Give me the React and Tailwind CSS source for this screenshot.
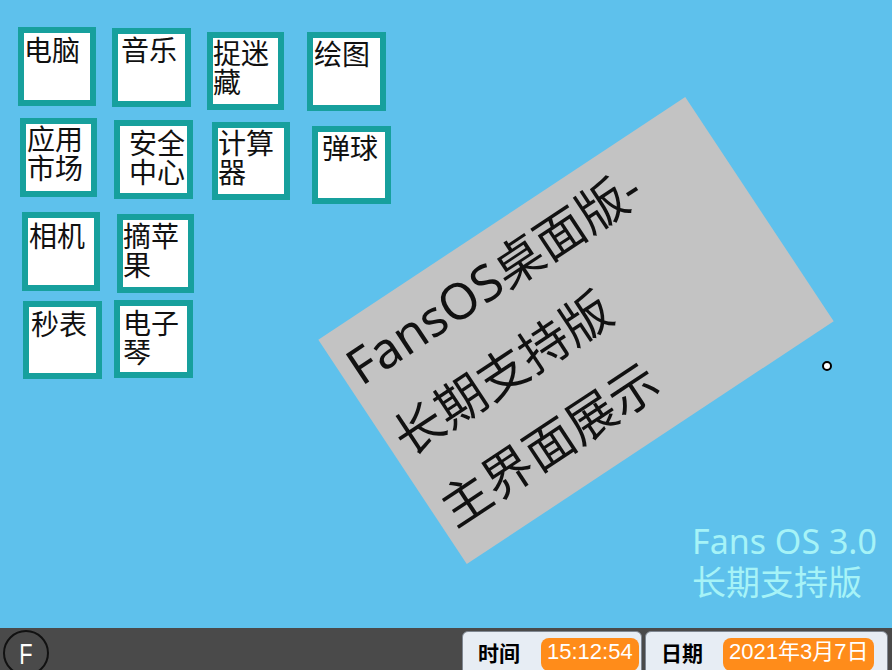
import React from "react";

const CJK = { fontFamily: "'Noto Sans CJK SC', sans-serif" };
const MIXED = { fontFamily: "'Noto Sans', 'Noto Sans CJK SC', sans-serif" };
const CLOCK = { fontFamily: "'Liberation Sans', 'Noto Sans CJK SC', sans-serif" };

// desktop sprites, each sits where the stage put it
const tiles = [
  { label: "电脑", box: "left-[18px] top-[27px] w-[78px] h-[79px]", pad: "pl-[0px] pt-[2px]" },
  { label: "音乐", box: "left-[112px] top-[28px] w-[79px] h-[79px]", pad: "pl-[3px] pt-[1px]" },
  { label: "捉迷藏", box: "left-[207px] top-[32px] w-[77px] h-[78px]", pad: "pl-[0px] pt-[0px]" },
  { label: "绘图", box: "left-[307px] top-[32px] w-[79px] h-[79px]", pad: "pl-[1px] pt-[1px]" },
  { label: "应用市场", box: "left-[20px] top-[118px] w-[77px] h-[79px]", pad: "pl-[1px] pt-[0px]" },
  { label: "安全中心", box: "left-[114px] top-[120px] w-[79px] h-[79px]", pad: "pl-[9px] pt-[2px]" },
  { label: "计算器", box: "left-[212px] top-[122px] w-[78px] h-[78px]", pad: "pl-[0px] pt-[0px]" },
  { label: "弹球", box: "left-[312px] top-[126px] w-[79px] h-[78px]", pad: "pl-[4px] pt-[1px]" },
  { label: "相机", box: "left-[22px] top-[212px] w-[78px] h-[79px]", pad: "pl-[1px] pt-[3px]" },
  { label: "摘苹果", box: "left-[117px] top-[214px] w-[77px] h-[79px]", pad: "pl-[0px] pt-[1px]" },
  { label: "秒表", box: "left-[23px] top-[301px] w-[79px] h-[78px]", pad: "pl-[2px] pt-[2px]" },
  { label: "电子琴", box: "left-[114px] top-[300px] w-[79px] h-[78px]", pad: "pl-[3px] pt-[2px]" },
];

const ClockPanel = ({ label, value, className }) => (
  <div
    className={`h-[50px] rounded-t-[6px] bg-[#e7edf4] border border-[#7f8791] flex items-start ${className}`}
  >
    <span
      className="mt-[5px] text-[21px] leading-[30px] font-bold text-black"
      style={CJK}
    >
      {label}
    </span>
    <span
      className="mt-[6px] h-[33px] rounded-[8px] bg-[#ff8c1a] px-[6px] text-[22px] leading-[28px] text-white whitespace-nowrap"
      style={CLOCK}
    >
      {value}
    </span>
  </div>
);

const App = () => {
  return (
    <div className="w-[892px] h-[670px] overflow-hidden flex flex-col bg-[#5ec1ec]">
      {/* Stage */}
      <div className="relative h-[628px] shrink-0">
        {tiles.map((t) => (
          <div
            key={t.label}
            className={`absolute ${t.box} border-[6px] border-[#17a09d] bg-white overflow-hidden`}
          >
            <div
              className={`${t.pad} text-[28px] leading-[29px] text-[#111]`}
              style={CJK}
            >
              {t.label}
            </div>
          </div>
        ))}

        {/* Tilted banner */}
        <div className="absolute left-[356px] top-[196px] w-[440px] h-[269px] bg-[#c3c3c3] rotate-[-33.5deg]">
          <div
            className="pl-[10px] pt-[2px] text-[50px] leading-[85px] text-[#111] whitespace-nowrap"
            style={MIXED}
          >
            <div>FansOS桌面版-</div>
            <div>长期支持版</div>
            <div>主界面展示</div>
          </div>
        </div>

        <div className="absolute left-[822px] top-[361px] w-[10px] h-[10px] rounded-full border-2 border-black bg-white" />

        <div
          className="absolute left-[692px] top-[521px] text-[34px] leading-[41px] text-[#a6f3f7]"
          style={MIXED}
        >
          <div>Fans OS 3.0</div>
          <div>长期支持版</div>
        </div>
      </div>

      {/* Taskbar */}
      <div className="h-[42px] shrink-0 bg-[#4a4a4a] flex items-start overflow-hidden">
        <div className="ml-[3px] mt-[2px] w-[46px] h-[46px] shrink-0 rounded-full border-2 border-[#111] flex justify-center">
          <span
            className="mt-[5px] text-[29px] leading-[34px] text-white scale-x-75"
            style={CLOCK}
          >
            F
          </span>
        </div>

        <div className="ml-auto mr-[4px] mt-[3px] flex gap-[3px]">
          <ClockPanel
            label="时间"
            value="15:12:54"
            className="w-[180px] pl-[15px] gap-[21px]"
          />
          <ClockPanel
            label="日期"
            value="2021年3月7日"
            className="w-[243px] pl-[15px] gap-[20px]"
          />
        </div>
      </div>
    </div>
  );
};

export default App;
